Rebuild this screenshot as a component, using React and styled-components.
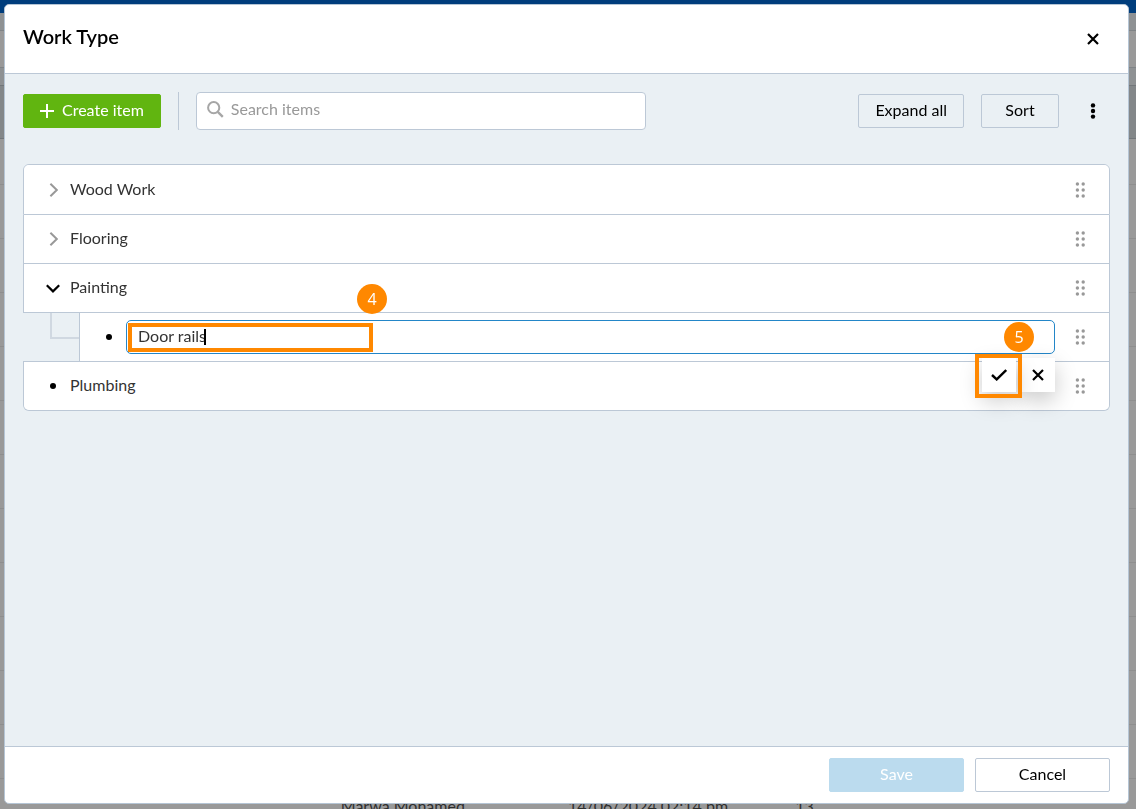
import React, { useState } from 'react'
import styled, { createGlobalStyle, css } from 'styled-components';

const GlobalStyle = createGlobalStyle`
  * {
    box-sizing: border-box;
  }

  body {
    margin: 0;
    font-family: Lato, "Liberation Sans", sans-serif;
    font-size: 16px;
    line-height: 20px;
    color: #000;
    overflow: hidden;
  }

  button, input {
    font: inherit;
    color: inherit;
  }
`;

const line = '#bcc8d6';
const orange = '#ff8800';

const CrossIcon = () => (
    <svg width='12' height='12' viewBox='0 0 12 12' fill='none' stroke='currentColor' strokeWidth='2.2' aria-hidden='true'>
        <path d='M1 1l10 10M11 1L1 11' />
    </svg>
)

const CheckIcon = () => (
    <svg width='16' height='12' viewBox='0 0 16 12' fill='none' stroke='#000' strokeWidth='2.4' aria-hidden='true'>
        <path d='M1 6l4.7 4.4L15.2 1' />
    </svg>
)

const PlusIcon = () => (
    <svg width='14' height='14' viewBox='0 0 14 14' fill='none' stroke='currentColor' strokeWidth='2' aria-hidden='true'>
        <path d='M7 0v14M0 7h14' />
    </svg>
)

const SearchIcon = () => (
    <svg width='17' height='17' viewBox='0 0 17 17' fill='none' stroke='#a6a6a6' strokeWidth='2' aria-hidden='true'>
        <circle cx='6.7' cy='6.7' r='5.6' />
        <path d='M10.8 10.8l5 5' strokeWidth='2.4' />
    </svg>
)

const KebabIcon = () => (
    <svg width='6' height='16' viewBox='0 0 6 16' fill='currentColor' aria-hidden='true'>
        <circle cx='3' cy='2.4' r='2.2' />
        <circle cx='3' cy='8' r='2.2' />
        <circle cx='3' cy='13.6' r='2.2' />
    </svg>
)

const ChevronRight = () => (
    <svg width='10' height='14' viewBox='0 0 10 14' fill='none' stroke='#999' strokeWidth='2' aria-hidden='true'>
        <path d='M2.4 .8L8.8 7l-6.4 6.2' />
    </svg>
)

const ChevronDown = () => (
    <svg width='14' height='10' viewBox='0 0 14 10' fill='none' stroke='#000' strokeWidth='2.2' aria-hidden='true'>
        <path d='M.8 2.2L7 8.4l6.2-6.2' />
    </svg>
)

const GripIcon = () => (
    <svg width='10' height='16' viewBox='0 0 10 16' fill='#999' aria-hidden='true'>
        {[2, 8, 14].map(y => (
            <React.Fragment key={y}>
                <circle cx='2.4' cy={y} r='1.7' />
                <circle cx='8.2' cy={y} r='1.7' />
            </React.Fragment>
        ))}
    </svg>
)

const Grip = () => <GripButton type='button' aria-label='Drag to reorder'><GripIcon /></GripButton>

const Item = ({nombre, expandible, abierto, onToggle}) => (
    <ListItem>
        <Row>
            <Marker>
                {
                    expandible
                        ? <Toggle type='button' aria-label={nombre} aria-expanded={abierto} onClick={onToggle}>
                            {abierto ? <ChevronDown /> : <ChevronRight />}
                        </Toggle>
                        : <Bullet />
                }
            </Marker>
            <Name>{nombre}</Name>
            <Grip />
        </Row>
    </ListItem>
)

const EditItem = ({valor, setValor}) => (
    <BranchItem>
        <Elbow />
        <Row $child>
            <Marker><Bullet /></Marker>
            <Field>
                <FieldInput aria-label='Item name' value={valor} onChange={e => setValor(e.target.value)} />
                <Caret />
                <Highlight />
                <Badge $step='name'>4</Badge>
                <Actions>
                    <ActionButton type='button' aria-label='Confirm' $marked><CheckIcon /></ActionButton>
                    <ActionButton type='button' aria-label='Discard'><CrossIcon /></ActionButton>
                </Actions>
                <Badge $step='confirm'>5</Badge>
            </Field>
            <Grip />
        </Row>
    </BranchItem>
)

const PageBehind = () => (
    <Backdrop aria-hidden='true'>
        <TopBar />
        <SubBar />
        <FilterBar />
        <SpacerBar />
        <HeadBar />
        <FirstRow />
        <BackTable>
            <colgroup>
                <col width='30%' />
                <col width='20%' />
                <col width='20%' />
                <col />
            </colgroup>
            <tbody>
                {Array.from({ length: 11 }, (_, i) => <tr key={i}><td colSpan='4' /></tr>)}
                <tr>
                    <td />
                    <td>Marwa Mohamed</td>
                    <td>14/06/2024 02:14 pm</td>
                    <td>13</td>
                </tr>
            </tbody>
        </BackTable>
    </Backdrop>
)

export default function App() {

    const [abierto, setAbierto] = useState(true)
    const [valor, setValor] = useState('Door rails')
    const [busqueda, setBusqueda] = useState('')

    return (
        <>
            <GlobalStyle />
            <PageBehind />
            <Overlay>
                <Modal role='dialog' aria-labelledby='modal-title'>
                    <Header>
                        <Title id='modal-title'>Work Type</Title>
                        <IconButton type='button' aria-label='Close'><CrossIcon /></IconButton>
                    </Header>
                    <Body>
                        <Toolbar>
                            <Button type='button' $variant='create'><PlusIcon /><Label>Create item</Label></Button>
                            <Divider />
                            <Search>
                                <SearchIcon />
                                <SearchInput type='text' aria-label='Search items' placeholder='Search items' value={busqueda} onChange={e => setBusqueda(e.target.value)} />
                            </Search>
                            <ToolbarEnd>
                                <Button type='button'><Label>Expand all</Label></Button>
                                <Button type='button'><Label>Sort</Label></Button>
                                <IconButton type='button' aria-label='More options'><KebabIcon /></IconButton>
                            </ToolbarEnd>
                        </Toolbar>
                        <List>
                            <Item nombre='Wood Work' expandible abierto={false} />
                            <Item nombre='Flooring' expandible abierto={false} />
                            <Item nombre='Painting' expandible abierto={abierto} onToggle={() => setAbierto(!abierto)} />
                            {abierto && <EditItem valor={valor} setValor={setValor} />}
                            <Item nombre='Plumbing' />
                        </List>
                    </Body>
                    <Footer>
                        <Button type='button' $variant='save' $wide disabled><Label>Save</Label></Button>
                        <Button type='button' $variant='white' $wide><Label>Cancel</Label></Button>
                    </Footer>
                </Modal>
            </Overlay>
        </>
    )
}

const Backdrop = styled.div`
  position: fixed;
  inset: 0;
  overflow: hidden;
  background: #999;
`;

const TopBar = styled.div`
  height: 13px;
  background: #003d7c;
`;

const SubBar = styled.div`
  height: 18px;
  background: #8e9193;
  border-bottom: 1px solid #7f8386;
`;

const FilterBar = styled.div`
  height: 37px;
  background: #999;
  border-bottom: 1px solid #7f8386;
`;

const SpacerBar = styled.div`
  height: 17px;
  background: #8e9193;
`;

const HeadBar = styled.div`
  height: 54px;
  background: #838789;
  border-top: 1px solid #72777a;
  border-bottom: 1px solid #72777a;
`;

const FirstRow = styled.div`
  height: 46px;
  border-bottom: 1px solid #8e8e8e;
`;

const BackTable = styled.table`
  width: 100%;
  table-layout: fixed;
  border-spacing: 0;
  color: #2e2e2e;

  td {
    height: 54px;
    padding: 0;
    border-bottom: 1px solid #8e8e8e;
  }
`;

const Overlay = styled.div`
  position: relative;
  display: flex;
  height: 100vh;
  padding: 4px 7px 5px 4px;
`;

const Modal = styled.section`
  flex: 1;
  display: flex;
  flex-direction: column;
  background: #fff;
  border: 1px solid #b5c5d5;
  border-radius: 5px;
  overflow: hidden;
`;

const Header = styled.header`
  display: flex;
  align-items: center;
  justify-content: space-between;
  padding: 17px 18px;
  border-bottom: 1px solid ${line};
`;

const Title = styled.h1`
  margin: 0;
  padding-bottom: 6px;
  font-size: 20px;
  line-height: 24px;
  font-weight: 600;
`;

const IconButton = styled.button`
  display: flex;
  align-items: center;
  justify-content: center;
  width: 34px;
  height: 34px;
  padding: 0;
  border: 0;
  background: transparent;
`;

const Body = styled.main`
  flex: 1;
  display: flex;
  flex-direction: column;
  gap: 34px;
  padding: 18px;
  background: #eaf0f4;
`;

const Toolbar = styled.div`
  display: flex;
  align-items: center;
  gap: 17px;
`;

const ToolbarEnd = styled.div`
  display: flex;
  gap: 17px;
  margin-left: auto;
`;

const Divider = styled.span`
  width: 1px;
  height: 38px;
  background: ${line};
`;

const Button = styled.button`
  display: flex;
  align-items: center;
  justify-content: center;
  gap: 8px;
  min-width: ${({ $wide }) => $wide ? '135px' : '78px'};
  height: 34px;
  padding: 0 16px;
  border: 1px solid ${line};
  border-radius: 2px;
  background: transparent;

  ${({ $variant }) => $variant === 'white' && css`
    background: #fff;
  `}

  ${({ $variant }) => $variant === 'create' && css`
    border-color: #61b510;
    background: #61b510;
    color: #fff;
  `}

  ${({ $variant }) => $variant === 'save' && css`
    border-color: #bbdbee;
    background: #bbdbee;
    color: #fff;
  `}
`;

const Label = styled.span`
  padding-bottom: 2px;
`;

const Search = styled.label`
  display: flex;
  align-items: center;
  gap: 7px;
  flex: 0 1 450px;
  height: 38px;
  padding: 0 10px 4px;
  border: 1px solid ${line};
  border-radius: 4px;
  background: #fff;
`;

const SearchInput = styled.input`
  flex: 1;
  min-width: 0;
  padding: 0;
  border: 0;
  outline: 0;
  background: transparent;

  &::placeholder {
    color: #999;
    opacity: 1;
  }
`;

const List = styled.ul`
  display: grid;
  grid-template-rows: 51px;
  grid-auto-rows: 49px;
  margin: 0;
  padding: 0;
  list-style: none;
  color: #333;
`;

const ListItem = styled.li`
  display: flex;
  border: 1px solid ${line};
  border-top-width: 0;
  background: #fff;
  overflow: hidden;

  &:first-child {
    border-top-width: 1px;
    border-radius: 6px 6px 0 0;
  }

  &:last-child {
    border-radius: 0 0 6px 6px;
  }
`;

const BranchItem = styled.li`
  display: flex;
  padding-left: 27px;
  border-right: 1px solid ${line};
  border-bottom: 1px solid ${line};
`;

const Elbow = styled.span`
  width: 29px;
  height: 26px;
  border-left: 2px solid #d0d8e1;
  border-bottom: 2px solid #d0d8e1;
`;

const Row = styled.div`
  flex: 1;
  display: flex;
  align-items: center;
  padding: 0 12px 0 17px;
  background: #fff;

  ${({ $child }) => $child && css`
    border-left: 1px solid ${line};
  `}
`;

const Marker = styled.span`
  display: flex;
  justify-content: center;
  width: 24px;
  margin-right: 5px;
`;

const Toggle = styled.button`
  display: flex;
  align-items: center;
  justify-content: center;
  width: 24px;
  height: 24px;
  padding: 0;
  border: 0;
  background: transparent;
`;

const Bullet = styled.span`
  width: 6px;
  height: 6px;
  border-radius: 50%;
  background: #000;
`;

const Name = styled.span`
  flex: 1;
  padding-bottom: 2px;
`;

const GripButton = styled.button`
  display: flex;
  align-items: center;
  justify-content: center;
  width: 34px;
  height: 34px;
  padding: 0;
  border: 0;
  background: transparent;
`;

const Field = styled.div`
  position: relative;
  flex: 1;
  margin-right: 8px;
`;

const FieldInput = styled.input`
  display: block;
  width: 100%;
  height: 34px;
  padding: 0 11px 4px;
  border: 1px solid #2386c8;
  border-radius: 5px;
  outline: 0;
  background: #fff;
`;

const Caret = styled.span`
  position: absolute;
  top: 9px;
  left: 78px;
  width: 2px;
  height: 16px;
  background: #000;
`;

const Highlight = styled.span`
  position: absolute;
  top: 3px;
  left: 2px;
  width: 245px;
  height: 29px;
  border: 4px solid ${orange};
  pointer-events: none;
`;

const Badge = styled.span`
  position: absolute;
  z-index: 2;
  width: 30px;
  height: 30px;
  border-radius: 50%;
  background: ${orange};
  color: #fff;
  font-family: "Open Sans", sans-serif;
  font-weight: 500;
  line-height: 30px;
  text-align: center;

  ${({ $step }) => $step === 'name' ? css`
    top: -36px;
    left: 231px;
  ` : css`
    top: 2px;
    right: 21px;
  `}
`;

const Actions = styled.div`
  position: absolute;
  z-index: 1;
  top: 38px;
  right: 0;
  display: flex;
  gap: 5px;
`;

const ActionButton = styled.button`
  position: relative;
  display: flex;
  align-items: center;
  justify-content: center;
  width: 34px;
  height: 34px;
  padding: 0;
  border: 0;
  background: #fff;
  color: #000;
  box-shadow: 0 8px 22px rgba(0, 0, 0, 0.22);

  ${({ $marked }) => $marked && css`
    z-index: 1;

    &::after {
      content: '';
      position: absolute;
      inset: -4px -6px -6px -7px;
      border: 4px solid ${orange};
    }
  `}
`;

const Footer = styled.footer`
  display: flex;
  justify-content: flex-end;
  gap: 11px;
  padding: 11px 18px;
  border-top: 1px solid ${line};
`;
